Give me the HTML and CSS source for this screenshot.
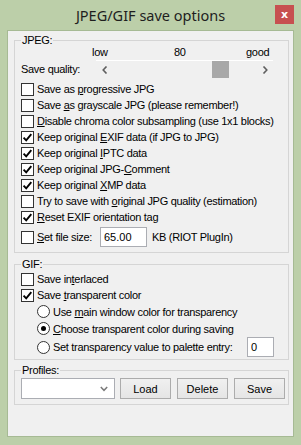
FILE: index.html
```html
<!DOCTYPE html>
<html lang="en">
<head>
    <meta charset="UTF-8">
    <meta name="viewport" content="width=device-width, initial-scale=1.0">
    <title>JPEG/GIF save options</title>
    <link rel="stylesheet" href="styles.css">
</head>
<body>
    <div class="window">
        <div class="titlebar">
            <span class="title">JPEG/GIF save options</span>
            <button class="close">x</button>
        </div>
        <div class="client">
            <fieldset class="group jpeg">
                <legend>JPEG:</legend>
                <div class="scale">
                    <span class="low">low</span>
                    <span class="mid">80</span>
                    <span>good</span>
                </div>
                <div class="quality">
                    <span class="quality-label">Save quality:</span>
                    <div class="scrollbar">
                        <span class="arrow">
                            <svg width="6" height="8" viewBox="0 0 6 8"><path d="M4.5 0.5 L1.2 4 L4.5 7.5" fill="none" stroke="#5f5f5f" stroke-width="1.6"/></svg>
                        </span>
                        <div class="track"><div class="thumb"></div></div>
                        <span class="arrow">
                            <svg width="6" height="8" viewBox="0 0 6 8"><path d="M1.5 0.5 L4.8 4 L1.5 7.5" fill="none" stroke="#5f5f5f" stroke-width="1.6"/></svg>
                        </span>
                    </div>
                </div>
                <label class="check"><span class="box"></span><span>Save as <u>p</u>rogressive JPG</span></label>
                <label class="check"><span class="box"></span><span>Save <u>a</u>s grayscale JPG (please remember!)</span></label>
                <label class="check"><span class="box"></span><span><u>D</u>isable chroma color subsampling (use 1x1 blocks)</span></label>
                <label class="check"><span class="box on"></span><span>Keep original <u>E</u>XIF data (if JPG to JPG)</span></label>
                <label class="check"><span class="box on"></span><span>Keep original <u>I</u>PTC data</span></label>
                <label class="check"><span class="box on"></span><span>Keep original JPG-<u>C</u>omment</span></label>
                <label class="check"><span class="box on"></span><span>Keep original <u>X</u>MP data</span></label>
                <label class="check"><span class="box"></span><span>Try to save with <u>o</u>riginal JPG quality (estimation)</span></label>
                <label class="check"><span class="box on"></span><span><u>R</u>eset EXIF orientation tag</span></label>
                <div class="check filesize">
                    <span class="box"></span>
                    <span class="filesize-label"><u>S</u>et file size:</span>
                    <input class="field size" type="text" value="65.00">
                    <span>KB (RIOT PlugIn)</span>
                </div>
            </fieldset>

            <fieldset class="group gif">
                <legend>GIF:</legend>
                <label class="check"><span class="box"></span><span>Save in<u>t</u>erlaced</span></label>
                <label class="check"><span class="box on"></span><span>Save <u>t</u>ransparent color</span></label>
                <label class="radio"><span class="dot"></span><span>Use <u>m</u>ain window color for transparency</span></label>
                <label class="radio"><span class="dot on"></span><span><u>C</u>hoose transparent color during saving</span></label>
                <div class="radio entry">
                    <span class="dot"></span>
                    <span>Set transparency value to palette entry:</span>
                    <input class="field index" type="text" value="0">
                </div>
            </fieldset>

            <fieldset class="group profiles">
                <legend>Profiles:</legend>
                <div class="profile-row">
                    <div class="combo">
                        <svg width="8" height="6" viewBox="0 0 8 6"><path d="M0.8 1 L4 4.3 L7.2 1" fill="none" stroke="#7a7a7a" stroke-width="1.5"/></svg>
                    </div>
                    <button class="btn load">Load</button>
                    <button class="btn">Delete</button>
                    <button class="btn">Save</button>
                </div>
            </fieldset>
        </div>
    </div>
</body>
</html>
```

FILE: styles.css
```css
body {
    margin: 0;
    font-family: "Liberation Sans", Arial, sans-serif;
    font-size: 11px;
    letter-spacing: -0.3px;
    color: #000000;
}
.window {
    width: 301px;
    height: 445px;
    box-sizing: border-box;
    display: flex;
    flex-direction: column;
    padding: 0 7px 8px 7px;
    background: #bccfa9;
}
.titlebar {
    height: 30px;
    box-sizing: border-box;
    padding-top: 5px;
    display: grid;
    grid-template-columns: 1fr auto 1fr;
    align-items: start;
}
.title {
    grid-column: 2;
    font-family: "Noto Sans", sans-serif;
    font-size: 14.5px;
    letter-spacing: 0;
    line-height: 20px;
    color: #1e1e1e;
}
.close {
    grid-column: 3;
    justify-self: end;
    margin-right: 0;
    width: 19px;
    height: 19px;
    padding: 0;
    border: none;
    background: #c75050;
    color: #ffffff;
    font-family: "DejaVu Sans", sans-serif;
    font-size: 11px;
    font-weight: bold;
    line-height: 17px;
}
.client {
    flex: 1;
    background: #f0f0f0;
    border: 1px solid #a6ba94;
    display: flex;
    flex-direction: column;
}
.group {
    margin: 2px 4px 0 6px;
    padding: 0 6px 4px 6px;
    border: 1px solid #d5d5d5;
    min-width: 0;
}
.group legend {
    padding: 0 1px;
    line-height: 14px;
}
.gif {
    margin-top: 4px;
    padding-bottom: 2px;
}
.profiles {
    margin-top: 3px;
    padding-right: 3px;
    padding-bottom: 5px;
}
.scale {
    display: flex;
    height: 12px;
    line-height: 12px;
    margin-top: -1px;
    padding-left: 71px;
}
.scale .low { width: 82px; }
.scale .mid { width: 72px; }
.quality {
    display: flex;
    align-items: center;
    height: 18px;
    margin-top: 2px;
}
.quality-label {
    width: 75px;
}
.scrollbar {
    display: flex;
    width: 177px;
    height: 17px;
    border-top: 1px solid #ffffff;
    background: #f0f0f0;
}
.arrow {
    width: 17px;
    display: flex;
    align-items: center;
    justify-content: center;
}
.track {
    flex: 1;
    display: flex;
}
.thumb {
    width: 17px;
    margin-left: 99px;
    background: #a8a8a8;
}
.check,
.radio {
    display: flex;
    align-items: center;
    height: 16px;
    white-space: nowrap;
}
.jpeg .check:first-of-type {
    margin-top: 3px;
}
.box {
    width: 13px;
    height: 13px;
    box-sizing: border-box;
    border: 1px solid #333333;
    background: #ffffff;
    margin-right: 3px;
    flex: none;
}
.box.on {
    background: #ffffff url("data:image/svg+xml,%3Csvg xmlns='http://www.w3.org/2000/svg' width='11' height='11'%3E%3Cpath d='M1.6 5.6 L4.2 8.3 L9.3 2.2' fill='none' stroke='%23000' stroke-width='1.9'/%3E%3C/svg%3E") no-repeat center;
}
.filesize {
    height: 22px;
    margin-top: 1px;
}
.filesize-label {
    width: 63px;
}
.field {
    height: 20px;
    box-sizing: border-box;
    border: 1px solid #abadb3;
    background: #ffffff;
    font: inherit;
    padding: 0 3px;
}
.size {
    width: 47px;
    margin-right: 5px;
}
.radio {
    height: 17px;
    padding-left: 16px;
}
.dot {
    width: 13px;
    height: 13px;
    box-sizing: border-box;
    border: 1px solid #333333;
    border-radius: 50%;
    background: #ffffff;
    margin-right: 3px;
    flex: none;
    display: flex;
    align-items: center;
    justify-content: center;
}
.dot.on::after {
    content: "";
    width: 5px;
    height: 5px;
    border-radius: 50%;
    background: #000000;
}
.entry {
    height: 20px;
}
.index {
    width: 27px;
    margin-left: auto;
    margin-right: 8px;
}
.profile-row {
    display: flex;
    margin-top: 1px;
}
.combo {
    width: 94px;
    height: 21px;
    box-sizing: border-box;
    border: 1px solid #abadb3;
    background: #ffffff;
    display: flex;
    align-items: center;
    justify-content: flex-end;
    padding-right: 6px;
}
.btn {
    width: 51px;
    height: 21px;
    margin-left: 6px;
    padding: 0;
    border: 1px solid #acacac;
    background: linear-gradient(#f0f0f0, #e5e5e5);
    font: inherit;
    color: #000000;
}
.btn.load {
    margin-left: 5px;
}
```
